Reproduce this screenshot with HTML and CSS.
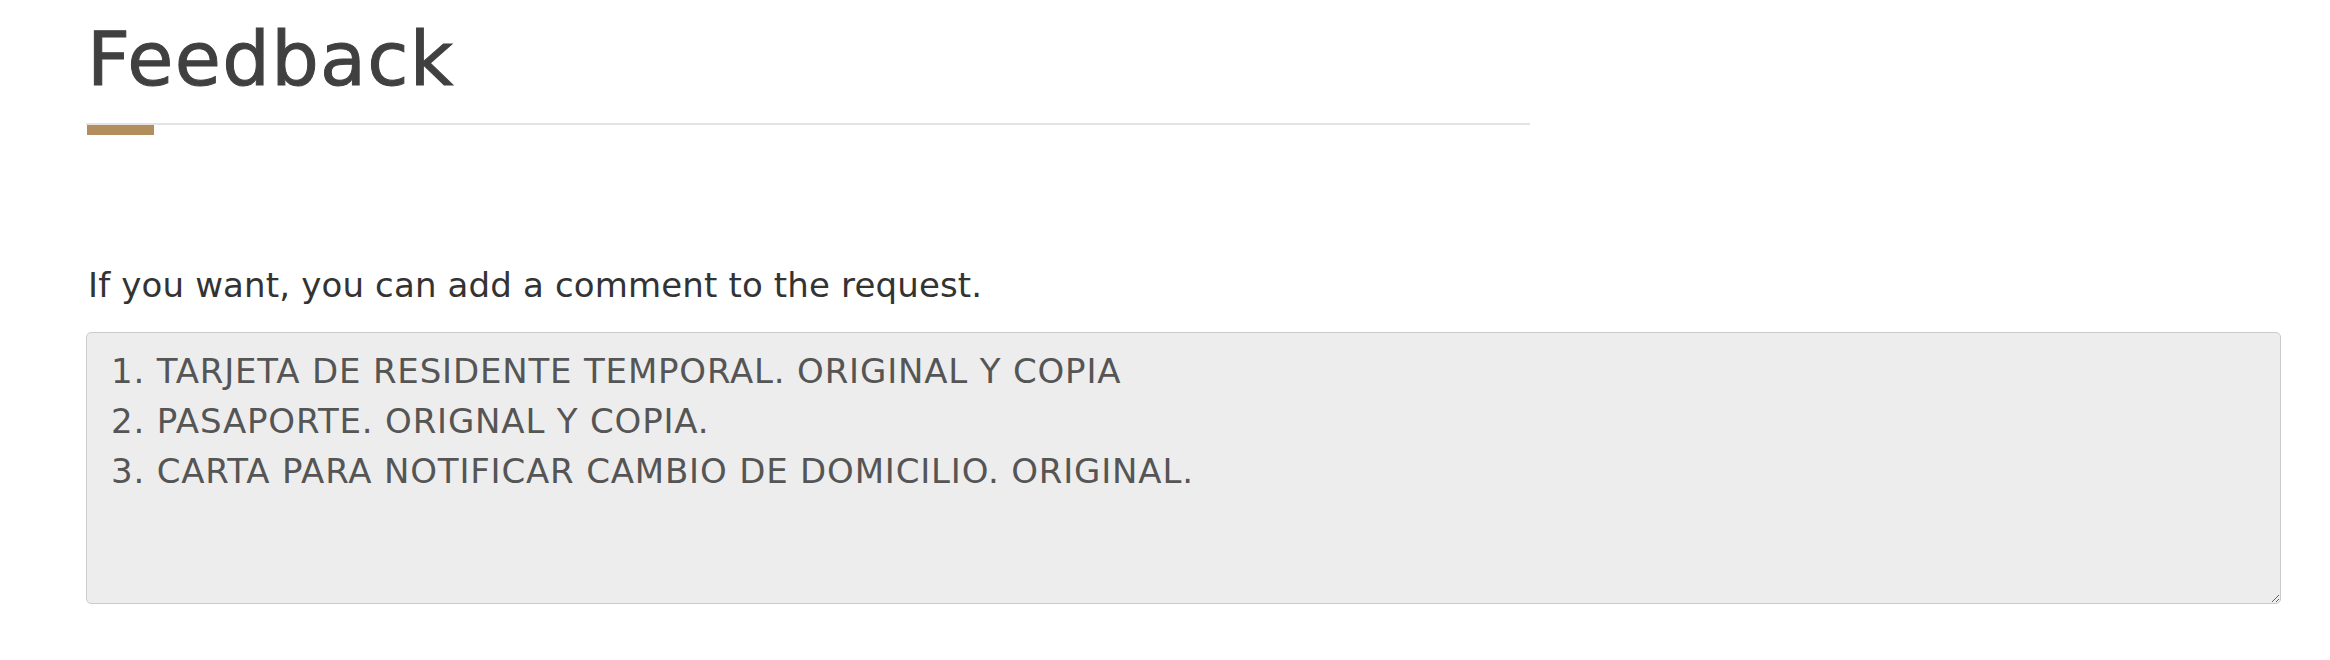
FILE: index.html
```html
<!DOCTYPE html>
<html lang="en">
<head>
    <meta charset="UTF-8">
    <meta name="viewport" content="width=device-width, initial-scale=1.0">
    <title>Feedback</title>
    <link rel="stylesheet" href="styles.css">
</head>
<body>

    <div class="page">
        <div class="title-wrap">
            <h1 class="title">Feedback</h1>
        </div>
        <div class="title-bar"></div>

        <p class="hint">If you want, you can add a comment to the request.</p>

        <textarea class="comment" name="comment" readonly>1. TARJETA DE RESIDENTE TEMPORAL. ORIGINAL Y COPIA
2. PASAPORTE. ORIGNAL Y COPIA.
3. CARTA PARA NOTIFICAR CAMBIO DE DOMICILIO. ORIGINAL.</textarea>
    </div>

</body>
</html>
```

FILE: styles.css
```css
body {
    font-family: "DejaVu Sans", sans-serif;
    background-color: #fff;
    margin: 0;
    padding: 0;
}

.page {
    padding: 14px 49px 0 86px;
}

.title-wrap {
    width: 1444px;
    padding-bottom: 19px;
    border-bottom: 2px solid #e4e4e4;
}

.title {
    margin: 0 0 0 1px;
    font-size: 75px;
    line-height: 90px;
    font-weight: normal;
    letter-spacing: 1.3px;
    color: #404040;
    -webkit-text-stroke: 1px #404040;
}

.title-bar {
    width: 67px;
    height: 10px;
    margin-left: 1px;
    background-color: #b38e5d;
}

.hint {
    margin: 128px 0 0 2px;
    font-size: 34px;
    line-height: 45px;
    letter-spacing: 0.15px;
    color: #333;
}

.comment {
    display: block;
    box-sizing: border-box;
    width: 100%;
    height: 272px;
    margin-top: 24px;
    padding: 13px 24px;
    font-family: inherit;
    font-size: 34px;
    line-height: 50px;
    letter-spacing: 0.82px;
    color: #555;
    background-color: #ededed;
    border: 1px solid #ccc;
    border-radius: 5px;
    outline: none;
    resize: vertical;
}
```
